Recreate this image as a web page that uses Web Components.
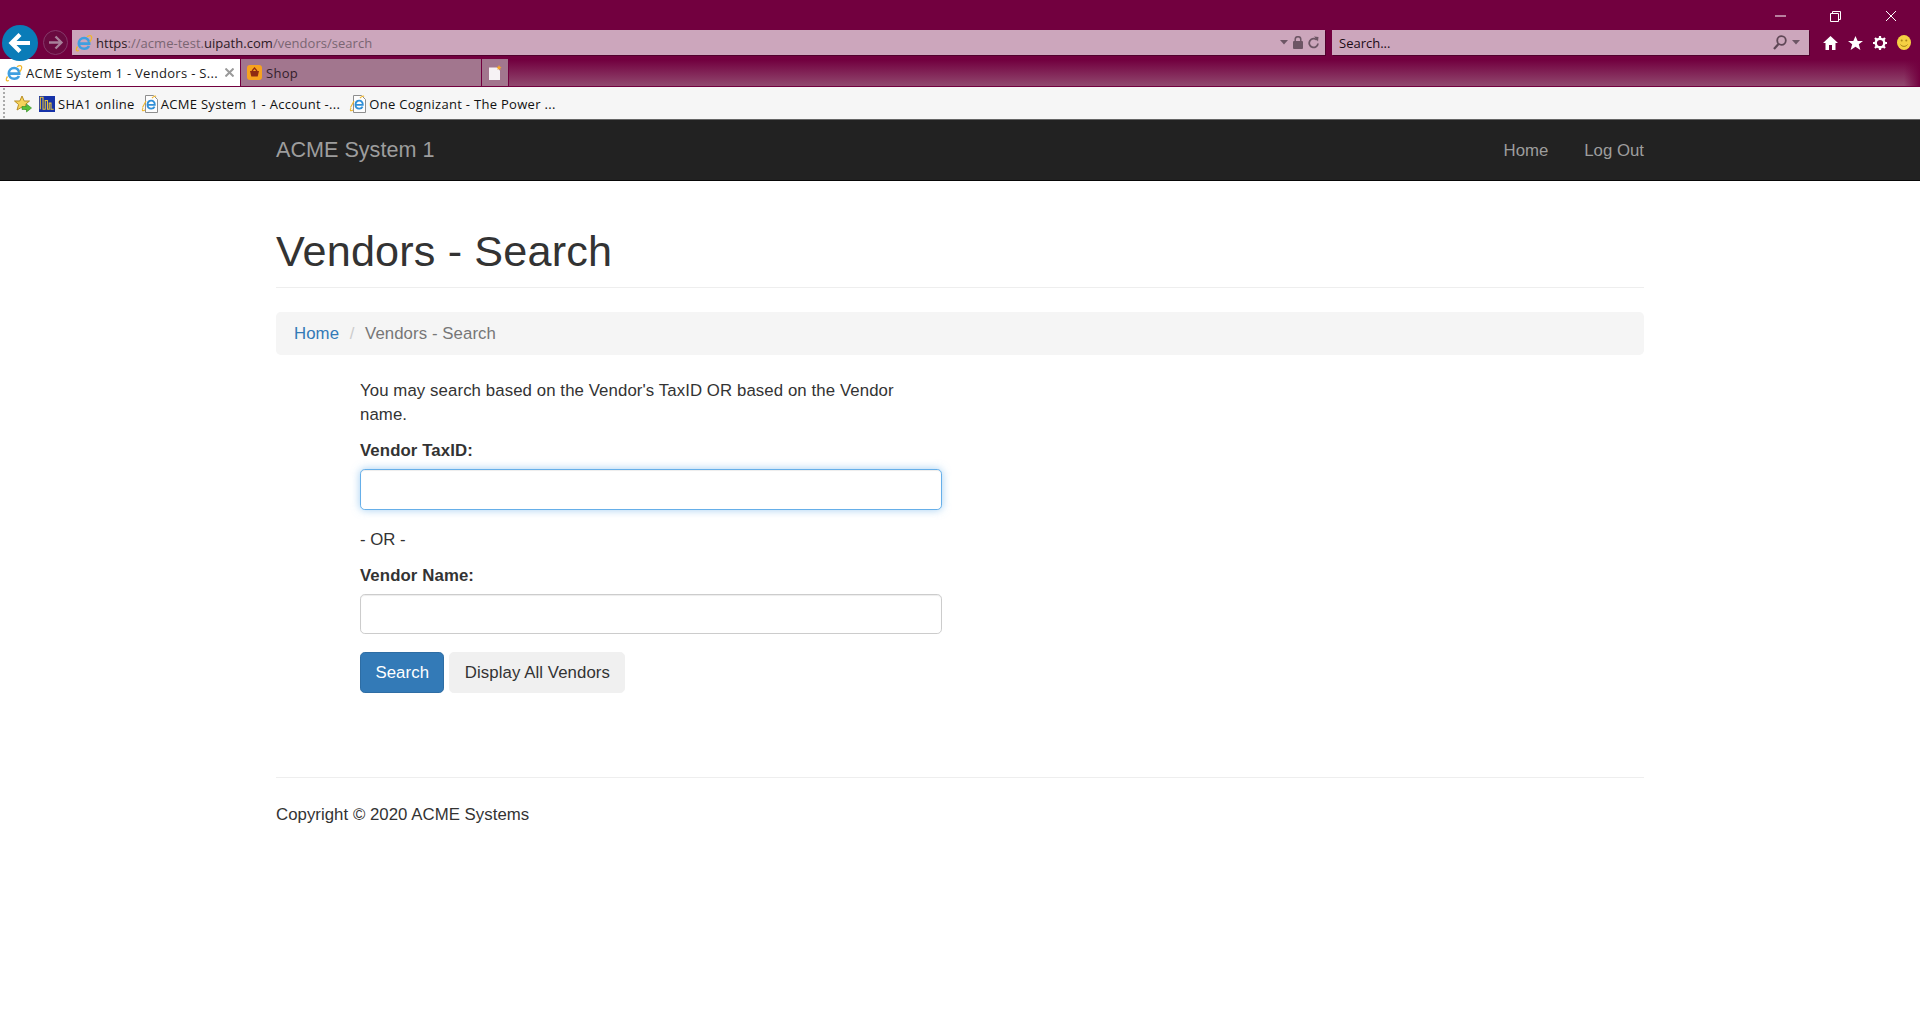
<!DOCTYPE html>
<html lang="en"><head><meta charset="utf-8"><title>ACME System 1 - Vendors - Search</title>
<style>
html,body{margin:0;padding:0;background:#fff;height:100%}
body{font-family:"Liberation Sans",Arial,sans-serif;font-size:16.8px;line-height:24px;color:#333;overflow:hidden}
</style></head><body>
<browser-chrome></browser-chrome>
<acme-navbar brand="ACME System 1"><a-link>Home</a-link><a-link>Log Out</a-link></acme-navbar>
<acme-page>
  <page-title>Vendors - Search</page-title>
  <bread-crumb current="Vendors - Search">Home</bread-crumb>
  <search-form></search-form>
  <page-footer>Copyright © 2020 ACME Systems</page-footer>
</acme-page>
<script>
const define=(name,css,html)=>{
  customElements.define(name,class extends HTMLElement{
    connectedCallback(){
      if(this.shadowRoot)return;
      const r=this.attachShadow({mode:'open'});
      const h=typeof html==='function'?html(this):html;
      r.innerHTML=`<style>${css}</style>${h}`;
    }
  });
};
const IE=`<svg viewBox="0 0 18 18" width="100%" height="100%" style="display:block"><path d="M4 9.600h10.200c.2-3.400-2-5.600-5-5.600-3.200 0-5.400 2.400-5.400 5.500 0 3.200 2.300 5.300 5.400 5.300 2.200 0 3.900-1 4.800-2.800" fill="none" stroke="#3f9fe0" stroke-width="2.600"/><path d="M2.500 12.500C.3 15.500 1 17.700 4 16.500M12 2.800c2.500-1.800 5-1.800 4.700 1-.1 1.200-.9 2.700-2 4" fill="none" stroke="#f0b62c" stroke-width="1.300"/></svg>`;
const DOC=`<svg viewBox="0 0 18 18" width="100%" height="100%" style="display:block"><path d="M4.500 .5h8l4 4v13h-12z" fill="#fdfdfd" stroke="#8e8e8e"/><path d="M6.800 9.800h7c.1-2.500-1.400-4.100-3.500-4.100-2.300 0-3.800 1.800-3.800 4 0 2.300 1.600 3.900 3.800 3.900 1.500 0 2.700-.7 3.300-2" fill="none" stroke="#2f8fd8" stroke-width="1.800"/><path d="M2 13C.5 15.500 1.500 16.500 4 15M11 3c2-2 3.500-2.300 4-1.500" fill="none" stroke="#f0b62c" stroke-width="1.100"/><path d="M1.500 12.500L5 6" stroke="#f0b62c" stroke-width="1.100"/></svg>`;
const CARET=`<svg width="8" height="5" viewBox="0 0 8 5" style="display:block"><path d="M0 0h8L4 4.500z" fill="#6d5665"/></svg>`;

define('back-button',`:host{display:block;width:36px;height:36px;margin:-4px 0 -5px 2px;position:relative;z-index:2;flex:none}svg{display:block}`,
`<svg width="36" height="36" viewBox="0 0 36 36"><circle cx="18" cy="18" r="18" fill="#0a7cb8"/><path d="M9 18h19M18 9.500L9.500 18l8.500 8.500" fill="none" stroke="#fff" stroke-width="4.200"/></svg>`);
define('forward-button',`:host{display:block;width:25px;height:25px;margin-left:5px;flex:none}svg{display:block}`,
`<svg width="25" height="25" viewBox="0 0 25 25"><circle cx="12.500" cy="12.500" r="12" fill="#6a0a40" stroke="#86386a"/><path d="M6 12.500h12M12.500 6.500l6 6-6 6" fill="none" stroke="#a8809a" stroke-width="2.300"/></svg>`);
define('address-bar',`:host{display:flex;align-items:center;width:1253px;height:25px;margin-left:4px;background:#cca6bc;box-sizing:border-box;flex:none;box-shadow:1px 1px 0 #50002c;color:#7a6572;font:13px/25px "Open Sans",sans-serif}
.ie{width:18px;height:18px;margin-left:3px}.u{margin-left:3px;padding-top:1px;white-space:nowrap;flex:1;letter-spacing:.03px}b{font-weight:400;color:#2c1a25}
.r{display:flex;align-items:center;margin-right:6px}.l{margin-left:5px;display:block}.c{margin-left:5px;display:block}`,
`<span class="ie">${IE}</span><span class="u"><b>https</b>://acme-test.<b>uipath.com</b>/vendors/search</span><span class="r">${CARET}<svg class="l" width="10" height="13" viewBox="0 0 10 13"><rect y="5" width="10" height="8" rx="1" fill="#6d5665"/><path d="M2.200 6V3.500a2.800 2.800 0 0 1 5.600 0V6" fill="none" stroke="#6d5665" stroke-width="1.500"/></svg><svg class="c" width="11" height="13" viewBox="0 0 11 13"><path d="M8.800 4A4.400 4.400 0 1 0 10 7.500" fill="none" stroke="#6d5665" stroke-width="1.800"/><path d="M6 .5l4.500 .5-.5 4.500z" fill="#6d5665"/></svg></span>`);
define('search-bar',`:host{display:flex;align-items:center;width:477px;height:25px;margin-left:7px;background:#cca6bc;flex:none;box-shadow:1px 1px 0 #50002c;color:#1c0c15;font:13px/25px "Open Sans",sans-serif}
.t{margin-left:7px;padding-top:1px;flex:1}.m{display:block;margin-right:5px}.k{display:block;margin-right:9px}`,
`<span class="t">Search...</span><svg class="m" width="14" height="15" viewBox="0 0 14 15"><circle cx="8.500" cy="5.500" r="4.300" fill="none" stroke="#5f4756" stroke-width="1.800"/><path d="M5.500 9L1 14" stroke="#5f4756" stroke-width="2.200"/></svg><span class="k">${CARET}</span>`);
define('tool-icons',`:host{display:flex;align-items:center;gap:10px;margin-left:14px;flex:none}svg{display:block}`,
`<svg width="15" height="14" viewBox="0 0 15 14"><path d="M7.500 0L0 7h2.500v7h3.500V9h3v5h3.500V7H15z" fill="#fff"/></svg>
<svg width="15" height="14" viewBox="0 0 15 14"><path d="M7.500 0l2.200 5h5.300l-4.200 3.300L12.400 14 7.500 10.700 2.600 14l1.600-5.700L0 5h5.300z" fill="#fff"/></svg>
<svg width="14" height="14" viewBox="0 0 14 14"><circle cx="7" cy="7" r="4.300" fill="none" stroke="#fff" stroke-width="2.400"/><path d="M7 0v3M7 11v3M0 7h3M11 7h3M2 2l2 2M10 10l2 2M2 12l2-2M10 4l2-2" stroke="#fff" stroke-width="2.200"/></svg>
<svg width="14" height="15" viewBox="0 0 14 15"><ellipse cx="7" cy="7.500" rx="7" ry="7.500" fill="#f5d043"/><circle cx="4.700" cy="5.500" r="1" fill="#a98518"/><circle cx="9.300" cy="5.500" r="1" fill="#a98518"/><path d="M3.500 9.500c1.500 2.500 5.500 2.500 7 0" fill="none" stroke="#a98518"/></svg>`);
define('window-controls',`:host{display:flex;justify-content:flex-end;align-items:center;height:29px;padding-top:3px;box-sizing:border-box}svg{display:block}`,
`<svg style="margin-right:44px" width="11" height="2" viewBox="0 0 11 2"><path d="M0 1h11" stroke="#fff"/></svg>
<svg style="margin-right:45px" width="11" height="11" viewBox="0 0 11 11"><path d="M.500 2.500h8v8h-8zM2.500 2.500v-2h8v8h-2" fill="none" stroke="#fff"/></svg>
<svg style="margin-right:24px" width="10" height="10" viewBox="0 0 10 10"><path d="M0 0l10 10M10 0L0 10" stroke="#fff"/></svg>`);
define('tab-item',`:host{display:flex;align-items:center;box-sizing:border-box;width:241px;height:27px;flex:none;background:#a2768e;color:#33202b;font:13px/27px "Open Sans",sans-serif;white-space:nowrap;border-right:1px solid #72003f;letter-spacing:.3px}
:host([active]){background:#fff;color:#1a1a1a}
.i{width:18px;height:18px;margin:0 3px 0 5px;flex:none}.t{flex:1;overflow:hidden;padding-top:1px}.x{display:block;margin-right:6px}`,
h=>h.hasAttribute('active')?`<span class="i">${IE}</span><span class="t"><slot></slot></span><svg class="x" width="9" height="9" viewBox="0 0 9 9"><path d="M.500 .500l8 8M8.500 .500l-8 8" stroke="#9a9a9a" stroke-width="2"/></svg>`:
`<span class="i" style="width:15px;height:15px;margin:0 4px 0 6px"><svg viewBox="0 0 15 15" width="15" height="15" style="display:block"><rect width="15" height="15" rx="3" fill="#f7a21e"/><path d="M3 6h9l-1.300 5.500H4.300z" fill="#8e2a12"/><path d="M5 6l2.500-3L10 6" fill="none" stroke="#8e2a12" stroke-width="1.200"/></svg></span><span class="t"><slot></slot></span>`);
define('new-tab',`:host{display:flex;align-items:center;justify-content:center;box-sizing:border-box;width:27px;height:27px;background:#a2768e;border-right:1px solid #72003f;flex:none}svg{display:block}`,
`<svg width="14" height="15" viewBox="0 0 14 15"><path d="M1 2.500h8l3 3V15H1z" fill="#f6f2f4"/><path d="M11 0l.8 1.700L13.500 2l-1.300 1.200.3 1.800-1.500-.9-1.500.9.300-1.800L8.500 2l1.700-.3z" fill="#f6a72a"/></svg>`);
define('fav-item',`:host{display:flex;align-items:center;height:31px;color:#111;font:13px/31px "Open Sans",sans-serif;white-space:nowrap;flex:none;letter-spacing:.3px}
.i{display:block;width:18px;height:18px;margin-right:2px}`,
h=>`<span class="i">${h.getAttribute('kind')==='sha'?`<svg viewBox="0 0 18 18" width="16" height="16" style="display:block;margin:1px 0 0 1px"><rect width="18" height="18" fill="#1632a8"/><path d="M1.500 15V1.500h3V15h2.500V5h2.500v10h2V8h2v7h3" fill="none" stroke="#e9c33a" stroke-width="1.200"/></svg>`:DOC}</span><slot></slot>`);
define('fav-star',`:host{display:block;flex:none;width:18px;height:18px}svg{display:block}`,
`<svg width="18" height="18" viewBox="0 0 18 18"><path d="M8 1l2.200 5h5.300l-4.200 3.500L13 15l-5-3-5 3 1.600-5.500L.5 6h5.300z" fill="#f6d35c" stroke="#b98f25"/><path d="M8 11.500h4.500V9l5 4-5 4v-2.500H8z" fill="#55c03a" stroke="#2f8a20" stroke-width=".6"/></svg>`);
define('browser-chrome',`:host{display:block;background:#72003f;height:120px;overflow:hidden}
.nav{display:flex;align-items:center;height:27px}
.tabs{display:flex;height:31px;padding-top:3px;box-sizing:border-box;border-bottom:1px solid #72003f;background:linear-gradient(#72003f 0,#72003f 4px,#91496f 100%)}
.tabs .edge{flex:1;background:linear-gradient(90deg,transparent calc(100% - 16px),#72003f)}
.fav{display:flex;align-items:center;height:33px;box-sizing:border-box;background:#f6f6f6;border-bottom:1px solid #666;padding:2px 0 0 14px;background-image:radial-gradient(#aaa 1px,transparent 1.200px);background-size:4px 4px;background-repeat:repeat-y;background-position:2px 0}
.fav fav-item{margin-left:6px}.fav fav-item+fav-item+fav-item{margin-left:9px}`,
`<window-controls></window-controls>
<div class="nav"><back-button></back-button><forward-button></forward-button><address-bar></address-bar><search-bar></search-bar><tool-icons></tool-icons></div>
<div class="tabs"><tab-item active>ACME System 1 - Vendors - S...</tab-item><tab-item>Shop</tab-item><new-tab></new-tab><span class="edge"></span></div>
<div class="fav"><fav-star></fav-star><fav-item kind="sha">SHA1 online</fav-item><fav-item>ACME System 1 - Account -...</fav-item><fav-item>One Cognizant - The Power ...</fav-item></div>`);
define('a-link',`:host{display:block;color:#9d9d9d;padding-top:1px}`,`<slot></slot>`);
define('acme-navbar',`:host{display:flex;align-items:center;justify-content:space-between;box-sizing:border-box;height:61px;background:#222;border-bottom:1px solid #080808;padding:0 276px}
.b{font-size:21.600px;color:#9d9d9d;line-height:24px;margin-top:-1px}.n{display:flex;gap:36px}`,
h=>`<span class="b">${h.getAttribute('brand')}</span><div class="n"><slot></slot></div>`);
define('acme-page',`:host{display:block;width:1368px;margin-left:276px}`,`<slot></slot>`);
define('page-title',`:host{display:block;margin-top:46px;padding-bottom:12px;border-bottom:1px solid #eee}
h1{margin:0;font:400 43.200px/48px "Liberation Sans",Arial,sans-serif;color:#333;letter-spacing:.15px}`,`<h1><slot></slot></h1>`);
define('bread-crumb',`:host{display:flex;box-sizing:border-box;height:43px;margin-top:24px;padding:9.600px 18px;background:#f5f5f5;border-radius:4.800px;letter-spacing:.08px}
a{color:#337ab7;text-decoration:none}.s{color:#ccc;padding:0 10.600px}.c{color:#777}`,
h=>`<a href="#"><slot></slot></a><span class="s">/</span><span class="c">${h.getAttribute('current')}</span>`);
define('text-field',`:host{display:block;margin-bottom:18px}
label{display:block;font-weight:700;margin-bottom:6px;letter-spacing:.1px}
input{display:block;width:100%;height:40.500px;box-sizing:border-box;border:1.200px solid #ccc;border-radius:4.800px;padding:7px 14px;font:inherit;color:#555;background:#fff;box-shadow:inset 0 1px 1px rgba(0,0,0,.075);outline:0}
:host([focused]) input{border-color:#66afe9;box-shadow:inset 0 1px 1px rgba(0,0,0,.075),0 0 8px rgba(102,175,233,.6)}`,
`<label><slot></slot></label><input type="text">`);
define('acme-button',`:host{display:block}
button{display:block;height:41px;box-sizing:border-box;border:1.200px solid #f0f0f0;border-radius:4.800px;background:#f0f0f0;color:#333;font:inherit;padding:0 14.400px;letter-spacing:.08px}
:host([primary]) button{background:#337ab7;border-color:#2e6da4;color:#fff}`,`<button type="button"><slot></slot></button>`);
define('search-form',`:host{display:block;width:582px;margin:24px 0 0 84px}
p{margin:0 0 12px}.i{max-width:540px;letter-spacing:.095px}.a{display:flex;gap:5px}`,
`<p class="i">You may search based on the Vendor's TaxID OR based on the Vendor name.</p>
<text-field focused>Vendor TaxID:</text-field><p>- OR -</p><text-field>Vendor Name:</text-field>
<div class="a"><acme-button primary>Search</acme-button><acme-button>Display All Vendors</acme-button></div>`);
define('page-footer',`:host{display:block;margin-top:84px;border-top:1px solid #eee;padding-top:25px;letter-spacing:.04px}`,`<slot></slot>`);
</script>
</body></html>
